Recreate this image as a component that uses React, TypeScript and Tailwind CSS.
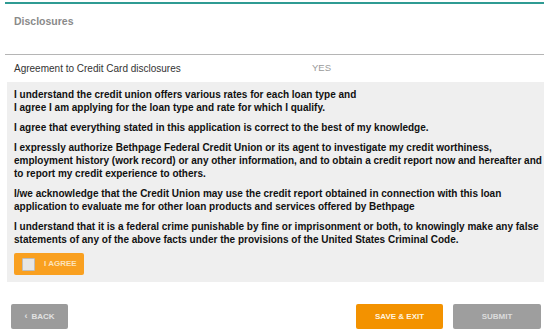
import React from "react";

const paras: string[][] = [
  [
    "I understand the credit union offers various rates for each loan type and",
    "I agree I am applying for the loan type and rate for which I qualify.",
  ],
  ["I agree that everything stated in this application is correct to the best of my knowledge."],
  [
    "I expressly authorize Bethpage Federal Credit Union or its agent to investigate my credit worthiness,",
    "employment history (work record) or any other information, and to obtain a credit report now and hereafter and",
    "to report my credit experience to others.",
  ],
  [
    "I/we acknowledge that the Credit Union may use the credit report obtained in connection with this loan",
    "application to evaluate me for other loan products and services offered by Bethpage",
  ],
  [
    "I understand that it is a federal crime punishable by fine or imprisonment or both, to knowingly make any false",
    "statements of any of the above facts under the provisions of the United States Criminal Code.",
  ],
];

export default function App() {
  return (
    <div
      className="w-[550px] h-[335px] bg-white overflow-hidden"
      style={{ fontFamily: '"Liberation Sans", Arial, sans-serif' }}
    >
      <div className="ml-[5px] w-[539px] mt-[2px] h-[2px] bg-[#2f9b93]" />
      <div className="pl-[14px] pt-[10px] h-[50px] text-[10.5px] font-bold text-[#8a8a8a]">Disclosures</div>
      <div className="ml-[5px] w-[539px] h-[1px] bg-[#b5b5b5]" />
      <div className="flex items-center h-[27px] pl-[14px] text-[10px] text-[#333]">
        <span className="w-[298px]">Agreement to Credit Card disclosures</span>
        <span className="text-[9.5px] text-[#9a9a9a]">YES</span>
      </div>
      <div className="ml-[7px] w-[537px] h-[200px] bg-[#efefef] pl-[7px] pt-[6px]">
        <div className="flex flex-col gap-[7px] text-[10px] leading-[13px] font-bold text-[#111]">
          {paras.map((p, i) => (
            <p key={i}>
              {p.map((l, j) => (
                <span key={j} className="block whitespace-nowrap">
                  {l}
                </span>
              ))}
            </p>
          ))}
        </div>
        <button className="mt-[7px] flex items-center w-[70px] h-[22px] rounded-[2px] bg-[#f9a020] pl-[8px]">
          <span className="w-[13px] h-[13px] bg-[#e6e6e6] border border-[#bdbdbd] rounded-[1px]" />
          <span className="ml-[9px] text-[8px] font-bold text-[#fde3bb]">I AGREE</span>
        </button>
      </div>
      <div className="flex items-center mt-[22px] pl-[11px] pr-[9px]">
        <button className="w-[57px] h-[25px] rounded-[2px] bg-[#9b9b9b] text-[8px] font-bold text-[#e2e2e2] flex items-center justify-center gap-[4px]">
          <span className="text-[9px]">‹</span>BACK
        </button>
        <div className="flex-1" />
        <button className="w-[87px] h-[25px] rounded-[2px] bg-[#f39200] text-[8px] font-bold text-[#fff2df]">
          SAVE &amp; EXIT
        </button>
        <button className="ml-[10px] w-[88px] h-[25px] rounded-[2px] bg-[#9e9e9e] text-[8px] font-bold text-[#dcdcdc]">
          SUBMIT
        </button>
      </div>
    </div>
  );
}
